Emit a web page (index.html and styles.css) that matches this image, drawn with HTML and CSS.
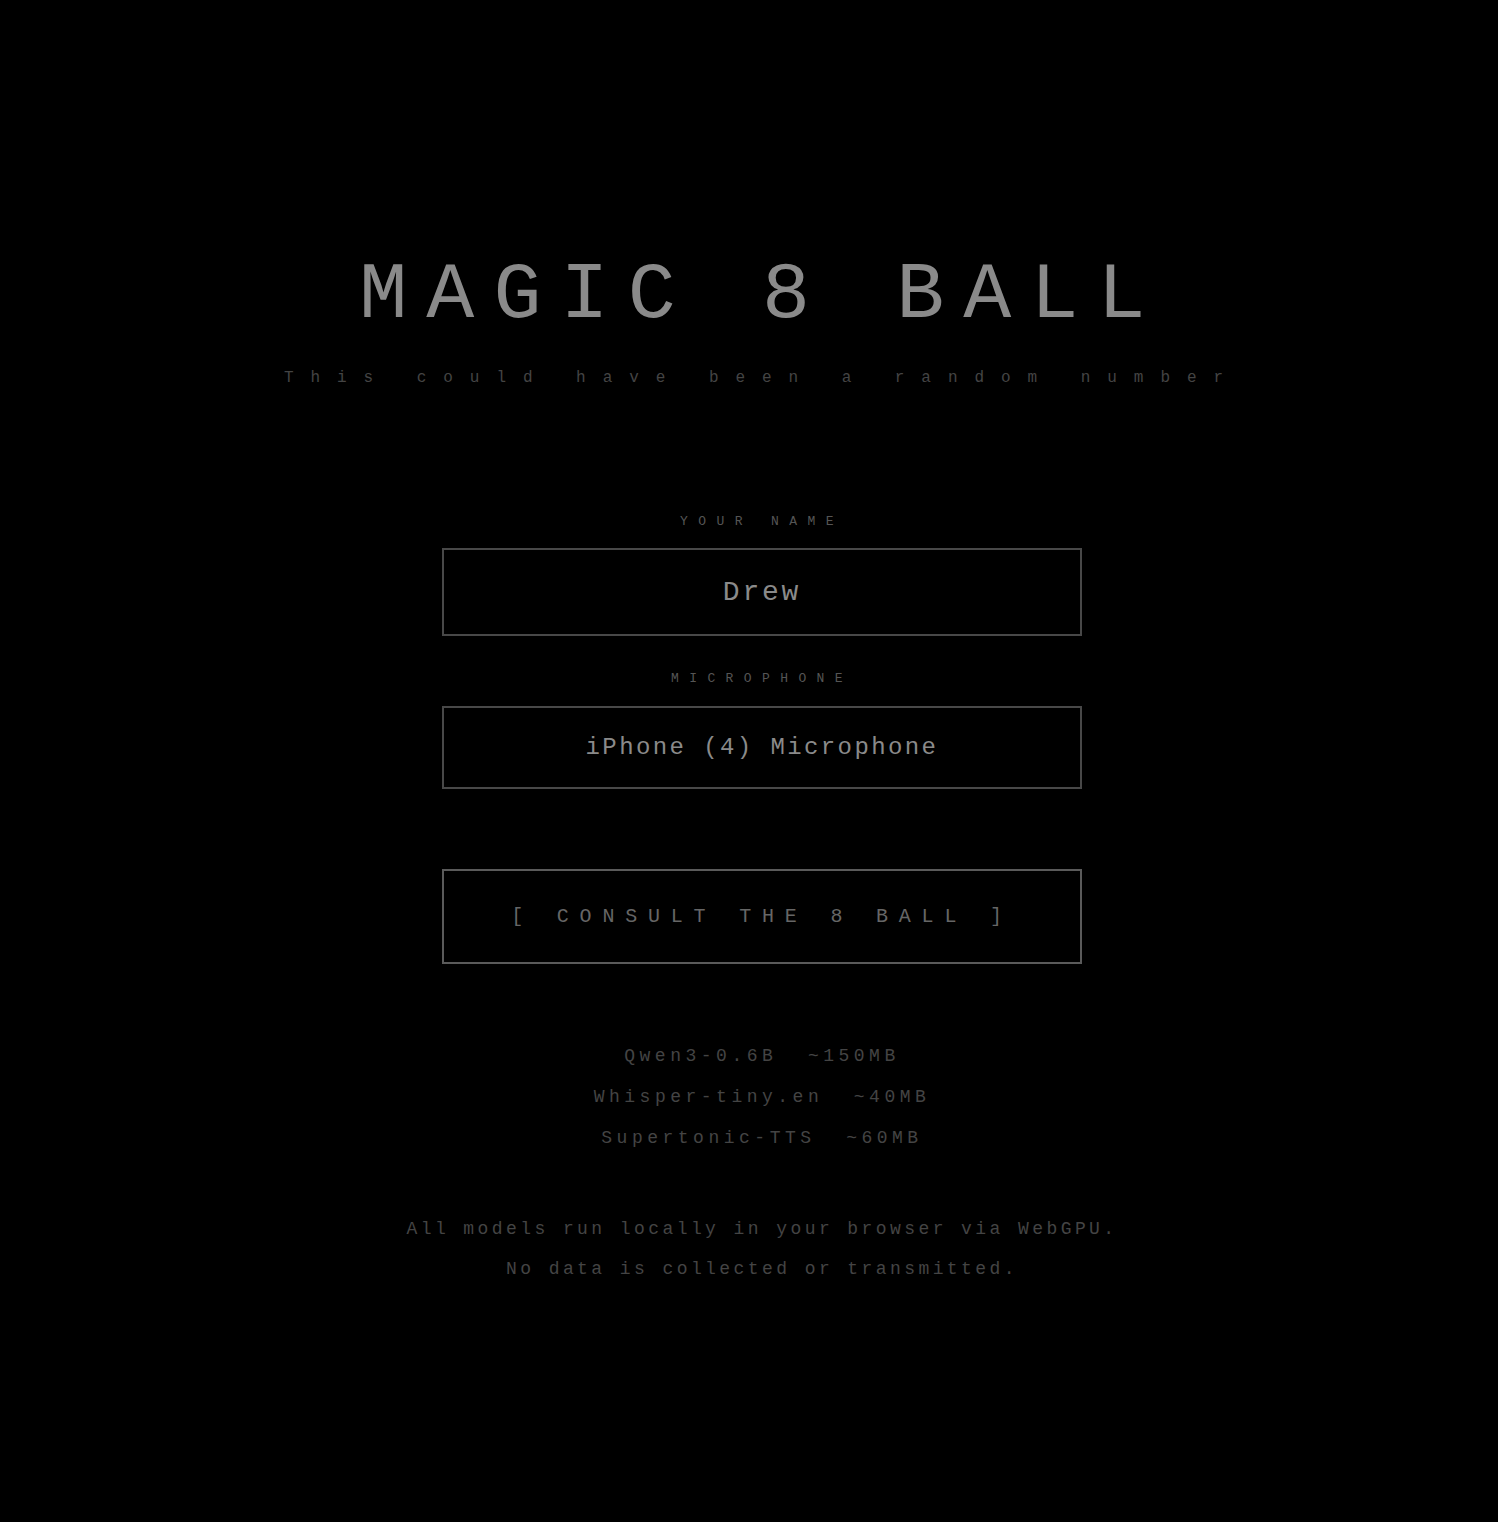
FILE: index.html
```html
<!DOCTYPE html>
<html lang="en">
<head>
<meta charset="utf-8">
<title>Magic 8 Ball</title>
<link rel="stylesheet" href="styles.css">
</head>
<body>
<main class="page">
  <header class="masthead">
    <h1 class="title">MAGIC 8 BALL</h1>
    <p class="tagline">This could have been a random number</p>
  </header>

  <form class="setup">
    <label class="field-label" for="name">YOUR NAME</label>
    <input class="field name-input" id="name" type="text" value="Drew">

    <label class="field-label mic-label" for="mic">MICROPHONE</label>
    <div class="field mic-select" id="mic">iPhone (4) Microphone</div>

    <button class="consult" type="button">[ CONSULT THE 8 BALL ]</button>
  </form>

  <ul class="models">
    <li>Qwen3-0.6B&nbsp;&nbsp;~150MB</li>
    <li>Whisper-tiny.en&nbsp;&nbsp;~40MB</li>
    <li>Supertonic-TTS&nbsp;&nbsp;~60MB</li>
  </ul>

  <p class="privacy">All models run locally in your browser via WebGPU.<br>No data is collected or transmitted.</p>
</main>
</body>
</html>
```

FILE: styles.css
```css
* {
  box-sizing: border-box;
}

html, body {
  margin: 0;
  background: #000;
}

body {
  font-family: "Courier New", "Nimbus Mono PS", "FreeMono", "Liberation Mono", monospace;
  color: #888;
}

.page {
  display: flex;
  flex-direction: column;
  align-items: center;
  padding: 256px 0 200px 26px;
  min-height: 1522px;
}

.masthead {
  display: flex;
  flex-direction: column;
  align-items: center;
}

.title {
  margin: 0;
  font-size: 80px;
  line-height: 80px;
  font-weight: 400;
  letter-spacing: 0.239em;
  color: #8a8a8a;
}

.tagline {
  margin: 34px 0 0;
  font-size: 16px;
  line-height: 16px;
  letter-spacing: 1.06em;
  color: #444;
}

.setup {
  display: flex;
  flex-direction: column;
  align-items: center;
  margin-top: 129px;
  width: 640px;
}

.field-label {
  display: block;
  font-size: 13px;
  line-height: 13px;
  letter-spacing: 0.8em;
  color: #555;
  margin-bottom: 20px;
}

.mic-label {
  margin-top: 36px;
  margin-bottom: 21px;
}

.field {
  width: 640px;
  background: #000;
  border: 2px solid #484848;
  color: #8a8a8a;
  font-family: inherit;
  text-align: center;
  outline: none;
}

.name-input {
  height: 88px;
  font-size: 28px;
  letter-spacing: 0.1em;
  padding: 0;
}

.mic-select {
  height: 83px;
  display: flex;
  align-items: center;
  justify-content: center;
  font-size: 24px;
  letter-spacing: 0.1em;
}

.consult {
  margin-top: 80px;
  width: 640px;
  height: 95px;
  background: #000;
  border: 2px solid #5a5a5a;
  color: #666;
  font-family: inherit;
  font-size: 20px;
  letter-spacing: 0.54em;
  cursor: pointer;
}

.models {
  list-style: none;
  margin: 72px 0 0;
  padding: 0;
  text-align: center;
  font-size: 18px;
  line-height: 41px;
  letter-spacing: 0.25em;
  color: #444;
}

.privacy {
  margin: 50px 0 0;
  text-align: center;
  font-size: 18px;
  line-height: 40px;
  letter-spacing: 0.19em;
  color: #444;
}
```
